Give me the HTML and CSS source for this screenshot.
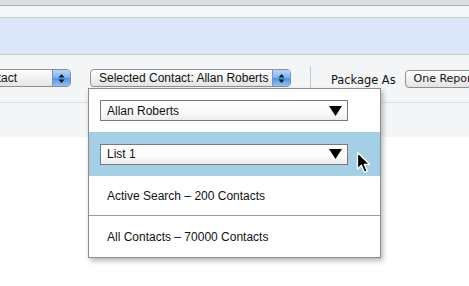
FILE: index.html
```html
<!DOCTYPE html>
<html>
<head>
    <title>Package Contacts</title>
    <link rel="stylesheet" href="styles.css">
</head>
<body>
    <div class="page">
        <div class="chrome-top"></div>
        <div class="chrome-strip"></div>
        <div class="banner"></div>

        <div class="toolbar">
            <div class="popup left-popup">
                <span class="popup-label">Select Contact</span>
                <span class="stepper">
                    <svg width="9" height="11" viewBox="0 0 9 11"><path d="M4.5 1 L7.5 4.5 L1.5 4.5 Z M4.5 10 L7.5 6.5 L1.5 6.5 Z" fill="#111"/></svg>
                </span>
            </div>
            <div class="popup contact-popup">
                <span class="popup-label">Selected Contact: Allan Roberts</span>
                <span class="stepper">
                    <svg width="9" height="11" viewBox="0 0 9 11"><path d="M4.5 1 L7.5 4.5 L1.5 4.5 Z M4.5 10 L7.5 6.5 L1.5 6.5 Z" fill="#111"/></svg>
                </span>
            </div>
            <div class="divider"></div>
            <span class="package-label">Package As</span>
            <div class="push-button">One Report</div>
        </div>

        <div class="subband"></div>
        <div class="content"></div>

        <!-- popup menu opened from the Selected Contact control -->
        <div class="menu">
            <div class="menu-row">
                <div class="combo">
                    <span>Allan Roberts</span>
                    <svg width="13" height="10" viewBox="0 0 13 10"><path d="M0 0 H13 L6.5 10 Z" fill="#000"/></svg>
                </div>
            </div>
            <div class="menu-row active">
                <div class="combo">
                    <span>List 1</span>
                    <svg width="13" height="10" viewBox="0 0 13 10"><path d="M0 0 H13 L6.5 10 Z" fill="#000"/></svg>
                </div>
            </div>
            <div class="menu-row text-row first-text">Active Search – 200 Contacts</div>
            <div class="menu-row text-row last-text">All Contacts – 70000 Contacts</div>
        </div>

        <svg class="cursor" width="16" height="24" viewBox="0 0 16 24">
            <path d="M1.5 1.5 L1.5 18 L5.4 14.3 L8.5 21.4 L11.2 20.2 L8.2 13.3 L13.6 13.3 Z" fill="#000" stroke="#fff" stroke-width="1.3" stroke-linejoin="round"/>
        </svg>
    </div>
</body>
</html>
```

FILE: styles.css
```css
body {
    margin: 0;
    padding: 0;
    background: #ffffff;
    font-family: "Liberation Sans", Arial, sans-serif;
    color: #111;
}

.page {
    position: relative;
    width: 469px;
    height: 286px;
    overflow: hidden;
    display: flex;
    flex-direction: column;
}

.chrome-top {
    height: 5px;
    background: #dde0e3;
    border-bottom: 1px solid #a9abae;
}

.chrome-strip {
    height: 11px;
    background: #f5f6f8;
    border-bottom: 1px solid #c9cacc;
}

.banner {
    height: 36px;
    background: #dbe7f8;
    border-bottom: 1px solid #c3c5c8;
}

.toolbar {
    height: 33px;
    padding-top: 14px;
    background: #f4f5f7;
    border-bottom: 1px solid #dcdde0;
    display: flex;
    align-items: flex-start;
    white-space: nowrap;
    overflow: hidden;
}

.popup {
    flex-shrink: 0;
    height: 16px;
    display: flex;
    align-items: center;
    justify-content: space-between;
    border: 1px solid #8f8f8f;
    border-radius: 4px;
    background: linear-gradient(#ffffff, #f2f2f2 50%, #e4e4e4);
    overflow: hidden;
    font-size: 12px;
}

.popup-label {
    padding-left: 8px;
    line-height: 16px;
}

.stepper {
    width: 17px;
    height: 16px;
    display: flex;
    align-items: center;
    justify-content: center;
    border-left: 1px solid #6f95c9;
    background: linear-gradient(#b8d8fb, #79b1f1 50%, #4d93e6 51%, #8ec2f6);
}

.left-popup {
    width: 139px;
    margin-left: -70px;
}

.contact-popup {
    width: 199px;
    margin-left: 19px;
}

.divider {
    flex-shrink: 0;
    width: 1px;
    height: 22px;
    margin-top: -3px;
    margin-left: 19px;
    background: #c6c7c9;
}

.package-label {
    flex-shrink: 0;
    margin-left: 20px;
    margin-top: 2px;
    font-family: "DejaVu Sans", sans-serif;
    font-size: 11.4px;
    line-height: 18px;
    color: #111;
}

.push-button {
    flex-shrink: 0;
    margin-left: 9px;
    margin-top: 1px;
    height: 16px;
    padding: 0 8px;
    border: 1px solid #8f8f8f;
    border-radius: 4px;
    background: linear-gradient(#ffffff, #f1f1f1 50%, #e3e3e3);
    font-family: "DejaVu Sans", sans-serif;
    font-size: 11px;
    line-height: 16px;
}

.subband {
    height: 34px;
    background: #f4f5f7;
}

.content {
    flex-grow: 1;
    background: #ffffff;
}

.menu {
    position: absolute;
    left: 88px;
    top: 88px;
    width: 291px;
    border: 1px solid #8c8c8c;
    background: #ffffff;
    box-shadow: 2px 3px 5px rgba(0, 0, 0, 0.28);
    display: flex;
    flex-direction: column;
}

.menu-row {
    height: 43px;
    padding-left: 11px;
    display: flex;
    align-items: center;
    font-size: 12px;
}

.menu-row.active {
    height: 44px;
    background: #a5cfe4;
}

.combo {
    width: 234px;
    height: 19px;
    padding: 0 6px 0 6px;
    display: flex;
    align-items: center;
    justify-content: space-between;
    border: 1px solid #7a7a7a;
    background: linear-gradient(#ffffff, #fbfbfb 60%, #ececec);
}

.combo svg {
    margin-right: -1px;
}

.text-row {
    padding-left: 18px;
}

.first-text {
    height: 39px;
    border-bottom: 1px solid #9a9a9a;
}

.last-text {
    height: 41px;
}

.cursor {
    position: absolute;
    left: 356px;
    top: 151px;
}
```
